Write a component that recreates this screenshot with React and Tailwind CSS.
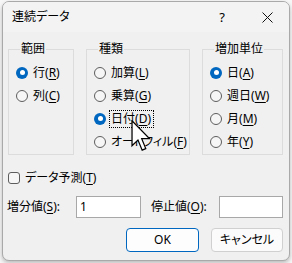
import React from "react";

const font = "font-['Noto_Sans','Noto_Sans_CJK_JP',sans-serif] [font-feature-settings:'palt']";

function Radio({ checked, label, acc, focus }) {
  return (
    <div className="flex items-center h-[23px] gap-[5px]">
      {checked ? (
        <span className="w-[12px] h-[12px] rounded-full bg-[#0067c0] flex items-center justify-center shrink-0">
          <span className="w-[5px] h-[5px] rounded-full bg-white" />
        </span>
      ) : (
        <span className="w-[12px] h-[12px] rounded-full border border-[#5d5d5d] bg-[#f6f6f6] shrink-0" />
      )}
      <span className={"text-[12px] leading-[14px] text-black whitespace-nowrap " + (focus ? "outline outline-1 outline-dotted outline-black outline-offset-[1px] pr-[1px]" : "")}>
        {label}(<span className="underline underline-offset-2">{acc}</span>)
      </span>
    </div>
  );
}

function Group({ title, w, children }) {
  return (
    <fieldset className={"border border-[#dcdcdc] h-[114px] min-w-0 m-0 pl-[7px] pt-[4px] " + w}>
      <legend className="ml-[4px] px-[1px] text-[12px] leading-[16px] text-black">{title}</legend>
      <div className="flex flex-col">{children}</div>
    </fieldset>
  );
}

export default function App() {
  return (
    <div className={"w-[292px] h-[263px] bg-[#f7f7f7] overflow-hidden relative " + font}>
      <div className="ml-[2px] mt-[1px] w-[288px] h-[260px] rounded-[7px] border border-[#a9a9a9] bg-[#f0f0f0] flex flex-col overflow-hidden shadow-[0_2px_4px_rgba(0,0,0,0.25)]">
        <div className="h-[30px] bg-[#f3f3f3] flex items-center shrink-0">
          <span className="pl-[9px] flex-1 text-[12px] leading-[16px] text-black">連続データ</span>
          <span className="w-[46px] text-center text-[13px] leading-[16px] text-black">?</span>
          <span className="w-[44px] flex items-center justify-center">
            <svg width="11" height="11" viewBox="0 0 11 11">
              <path d="M0.5 0.5 L10.5 10.5 M10.5 0.5 L0.5 10.5" stroke="#111" strokeWidth="1" />
            </svg>
          </span>
        </div>
        <div className="flex flex-col pl-[5px] pr-[6px]">
          <div className="flex gap-[12px] mt-[9px]">
            <Group title="範囲" w="w-[66px]">
              <Radio checked label="行" acc="R" />
              <Radio label="列" acc="C" />
            </Group>
            <Group title="種類" w="w-[104px]">
              <Radio label="加算" acc="L" />
              <Radio label="乗算" acc="G" />
              <Radio checked label="日付" acc="D" focus />
              <Radio label="オートフィル" acc="F" />
            </Group>
            <Group title="増加単位" w="w-[81px]">
              <Radio checked label="日" acc="A" />
              <Radio label="週日" acc="W" />
              <Radio label="月" acc="M" />
              <Radio label="年" acc="Y" />
            </Group>
          </div>
          <div className="flex items-center h-[16px] mt-[15px] gap-[5px]">
            <span className="w-[12px] h-[12px] rounded-[3px] border border-[#5d5d5d] bg-[#f6f6f6]" />
            <span className="text-[12px] leading-[14px] text-black">
              データ予測(<span className="underline underline-offset-2">T</span>)
            </span>
          </div>
          <div className="flex items-center h-[22px] mt-[10px]">
            <span className="w-[69px] -ml-[1px] pr-[1px] text-[12px] leading-[14px] text-black whitespace-nowrap">
              増分値(<span className="underline underline-offset-2">S</span>):
            </span>
            <div className="w-[65px] h-[22px] border border-[#a8a8a8] bg-white flex items-center pl-[3px] text-[12px] text-black">1</div>
            <span className="w-[68px] ml-[10px] text-[12px] leading-[14px] text-black whitespace-nowrap">
              停止値(<span className="underline underline-offset-2">O</span>):
            </span>
            <div className="w-[64px] h-[22px] border border-[#a8a8a8] bg-white" />
          </div>
          <div className="flex justify-end gap-[12px] mt-[10px]">
            <div className="w-[73px] h-[24px] rounded-[4px] border border-[#0067c0] bg-[#fdfdfd] flex items-center justify-center text-[12px] text-black">OK</div>
            <div className="w-[72px] h-[24px] rounded-[4px] border border-[#d0d0d0] bg-[#fbfbfb] flex items-center justify-center text-[12px] text-black">キャンセル</div>
          </div>
        </div>
      </div>
      <svg className="absolute left-[131px] top-[120px]" width="20" height="32" viewBox="0 0 12.5 20.5">
        <path d="M0.5 0.5 L0.5 16.5 L4.3 12.8 L7 19.3 L9.3 18.3 L6.7 12 L11.8 12 Z" fill="white" stroke="black" strokeWidth="0.8" strokeLinejoin="miter" />
      </svg>
    </div>
  );
}
